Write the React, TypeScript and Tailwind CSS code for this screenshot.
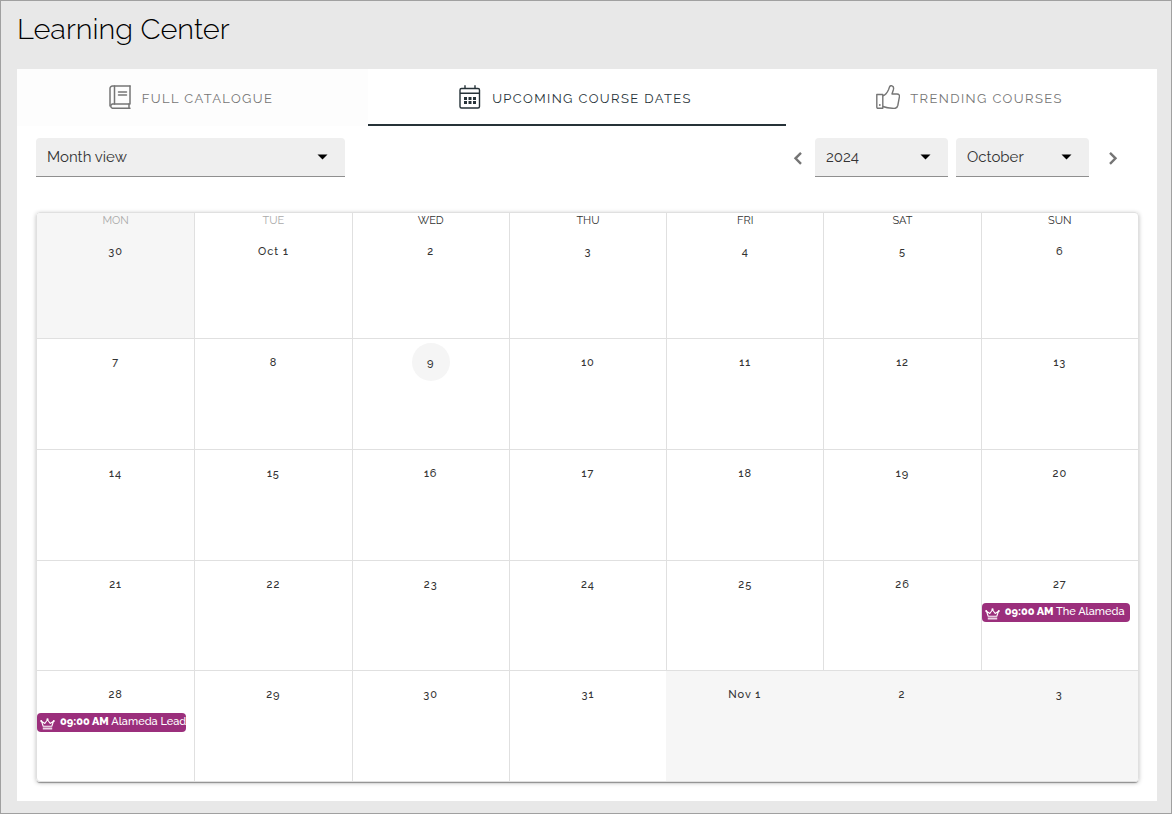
import React from "react";

type CalendarEvent = { time: string; title: string };
type Day = { label: string; muted?: boolean; today?: boolean; event?: CalendarEvent };

const weekdays = ["MON", "TUE", "WED", "THU", "FRI", "SAT", "SUN"];

const weeks: Day[][] = [
  [
    { label: "30", muted: true },
    { label: "Oct 1" },
    { label: "2" },
    { label: "3" },
    { label: "4" },
    { label: "5" },
    { label: "6" },
  ],
  [
    { label: "7" },
    { label: "8" },
    { label: "9", today: true },
    { label: "10" },
    { label: "11" },
    { label: "12" },
    { label: "13" },
  ],
  ["14", "15", "16", "17", "18", "19", "20"].map((label) => ({ label })),
  [
    { label: "21" },
    { label: "22" },
    { label: "23" },
    { label: "24" },
    { label: "25" },
    { label: "26" },
    { label: "27", event: { time: "09:00 AM", title: "The Alameda" } },
  ],
  [
    { label: "28", event: { time: "09:00 AM", title: "Alameda Lead" } },
    { label: "29" },
    { label: "30" },
    { label: "31" },
    { label: "Nov 1", muted: true },
    { label: "2", muted: true },
    { label: "3", muted: true },
  ],
];

function BookIcon() {
  return (
    <svg width="24" height="24" viewBox="0 0 24 24" fill="none" stroke="currentColor" strokeWidth="1.5" strokeLinejoin="round" strokeLinecap="round" aria-hidden="true">
      <path d="M22 1H4.5A2.5 2.5 0 0 0 2 3.500V21" />
      <path d="M22 1V19H4.300A2.200 2.200 0 0 0 4.300 23.200H22" />
      <path d="M21 19V23M6.500 1V19M10.500 7H18.500M10.500 10H18.500" />
    </svg>
  );
}

function CalendarIcon() {
  return (
    <svg width="24" height="24" viewBox="0 0 24 24" fill="none" stroke="currentColor" strokeWidth="1.4" aria-hidden="true">
      <rect x="2" y="3.500" width="19.500" height="19.500" rx="1.500" />
      <path d="M2 8.200H21.500M7 0.300V3.500M17 0.300V3.500" />
      <g fill="currentColor" stroke="none">
        <rect x="6" y="12" width="3" height="3" />
        <rect x="10.500" y="12" width="3" height="3" />
        <rect x="15" y="12" width="3" height="3" />
        <rect x="6" y="16" width="3" height="3" />
        <rect x="10.500" y="16" width="3" height="3" />
        <rect x="15" y="16" width="3" height="3" />
      </g>
    </svg>
  );
}

function ThumbIcon() {
  return (
    <svg width="24" height="24" viewBox="0 0 24 24" fill="none" stroke="currentColor" strokeWidth="1.4" strokeLinejoin="round" aria-hidden="true">
      <path d="M0.800 9.500H6.800V23.200H2Q0.800 23.200 0.800 22Z" />
      <path d="M6.800 10.800C9.500 10.200 11.300 7.500 12.500 4.800L13.500 2C14 0.600 15 0.500 16 0.800C17.800 1.400 17.800 3.300 17.300 5L16 9H21C23 9 23.800 10.200 23.400 12L21.800 20.500C21.300 22.700 20 23.500 18 23.400C14 23.200 10.500 22.800 6.800 21.500" />
      <circle cx="3.800" cy="20" r="0.900" fill="currentColor" stroke="none" />
    </svg>
  );
}

function CrownIcon() {
  return (
    <svg className="mt-[3px] shrink-0" width="15" height="12" viewBox="0 0 15 12" fill="none" stroke="currentColor" aria-hidden="true">
      <path d="M1.500 3.200L3.200 8.200H11.800L13.500 3.200L10.200 5.500L7.500 1.800L4.800 5.500Z" strokeWidth="1.100" strokeLinejoin="round" />
      <path d="M2.800 10.500H12.200" strokeWidth="1.800" strokeOpacity="0.8" />
      <g fill="currentColor" stroke="none">
        <circle cx="1.200" cy="3" r="1" />
        <circle cx="7.500" cy="1.300" r="1.100" />
        <circle cx="13.800" cy="3" r="1" />
      </g>
    </svg>
  );
}

function Chevron({ direction }: { direction: "left" | "right" }) {
  return (
    <svg width="24" height="24" viewBox="0 0 24 24" fill="none" stroke="currentColor" strokeWidth="2.400" aria-hidden="true">
      <path d={direction === "left" ? "M15 6.800L9.500 12.300L15 17.800" : "M9 6.800L14.500 12.300L9 17.800"} />
    </svg>
  );
}

function Picker({ label, options, className }: { label: string; options: string[]; className: string }) {
  return (
    <div className={`relative ${className}`}>
      <select
        aria-label={label}
        className="block h-[39px] w-full appearance-none rounded-t border-b border-[#8f8f8f] bg-[#efefef] pr-8 pl-[11px] text-[15px] text-[#333]"
      >
        {options.map((option) => (
          <option key={option}>{option}</option>
        ))}
      </select>
      <svg className="pointer-events-none absolute top-4 right-[17px]" width="11" height="6" viewBox="0 0 11 6" aria-hidden="true">
        <path d="M0.500 0.500H10.500L5.500 5.500Z" fill="#000" />
      </svg>
    </div>
  );
}

const tabs = [
  { label: "FULL CATALOGUE", icon: <BookIcon /> },
  { label: "UPCOMING COURSE DATES", icon: <CalendarIcon />, active: true },
  { label: "TRENDING COURSES", icon: <ThumbIcon /> },
];

export default function App() {
  return (
    <div className="min-h-screen border border-[#a0a0a0] bg-[#e8e8e8] px-4 pt-2 pr-[14px] pb-3 font-[Raleway,Lato,sans-serif] [font-variant-numeric:oldstyle-nums]">
      <h1 className="text-[29px] leading-10 font-light text-black">Learning Center</h1>

      <main className="mt-5 bg-white pb-[19px]">
        <div role="tablist" className="grid grid-cols-[351fr_418fr_371fr]">
          {tabs.map((tab, index) => (
            <button
              key={tab.label}
              role="tab"
              aria-selected={!!tab.active}
              className={`flex h-[57px] items-center justify-center gap-[10px] border-b-2 pr-1 text-[13px] tracking-[1.4px] ${
                tab.active ? "border-[#263238] text-[#263238]" : "border-transparent text-[#757575]"
              } ${index === 0 ? "bg-[#fdfdfd]" : ""}`}
            >
              {tab.icon}
              <span className="pt-1">{tab.label}</span>
            </button>
          ))}
        </div>

        <div className="flex items-center justify-between pt-3 pr-8 pl-[19px]">
          <Picker label="View" options={["Month view", "Week view", "Day view"]} className="w-[309px]" />
          <div className="flex items-center">
            <button aria-label="Previous month" className="mr-[5px] text-[#757575]">
              <Chevron direction="left" />
            </button>
            <Picker label="Year" options={["2024", "2025"]} className="mr-2 w-[133px]" />
            <Picker label="Month" options={["October", "November", "December"]} className="mr-3 w-[133px]" />
            <button aria-label="Next month" className="text-[#757575]">
              <Chevron direction="right" />
            </button>
          </div>
        </div>

        <div className="mt-[35px] mr-[18px] ml-[19px] overflow-hidden rounded-sm border border-[#e0e0e0] shadow-[0_2px_1px_-1px_rgba(0,0,0,0.35),0_1px_4px_rgba(0,0,0,0.25)]">
          <table className="w-full table-fixed border-separate border-spacing-0 text-center text-[#333]">
            <thead>
              <tr>
                {weekdays.map((name, index) => (
                  <th
                    key={name}
                    scope="col"
                    className={`h-[15px] border-l border-[#e0e0e0] p-0 text-[11px] leading-[15px] font-normal first:border-l-0 ${
                      index < 2 ? "text-[#aaa]" : ""
                    } ${index === 0 ? "bg-[#f6f6f6]" : ""}`}
                  >
                    {name}
                  </th>
                ))}
              </tr>
            </thead>
            <tbody>
              {weeks.map((week, weekIndex) => (
                <tr key={weekIndex}>
                  {week.map((day, dayIndex) => {
                    const lastWeek = weekIndex === weeks.length - 1;
                    const borderless = dayIndex === 0 || (lastWeek && day.muted);
                    return (
                      <td
                        key={dayIndex}
                        className={`border-[#e0e0e0] p-0 pt-[4px] align-top ${weekIndex < 3 ? "h-[111px]" : "h-[110px]"} ${
                          borderless ? "" : "border-l"
                        } ${lastWeek ? "" : "border-b"} ${day.muted ? "bg-[#f6f6f6]" : ""}`}
                      >
                        <div
                          className={`mx-auto flex h-[38px] items-center justify-center pt-[2px] text-[11px] font-medium tracking-[1px] ${
                            day.today ? "w-[38px] rounded-full bg-[#f5f5f5]" : ""
                          }`}
                        >
                          {day.label}
                        </div>
                        {day.event && (
                          <button className="flex h-[19px] w-[calc(100%-8px)] items-center gap-[5px] overflow-hidden rounded bg-[#9b2f7c] pl-[3px] text-[11px] font-medium whitespace-nowrap text-white">
                            <CrownIcon />
                            <span className="[font-variant-ligatures:no-contextual]">
                              <b className="font-extrabold">{day.event.time}</b> {day.event.title}
                            </span>
                          </button>
                        )}
                      </td>
                    );
                  })}
                </tr>
              ))}
            </tbody>
          </table>
        </div>
      </main>
    </div>
  );
}
